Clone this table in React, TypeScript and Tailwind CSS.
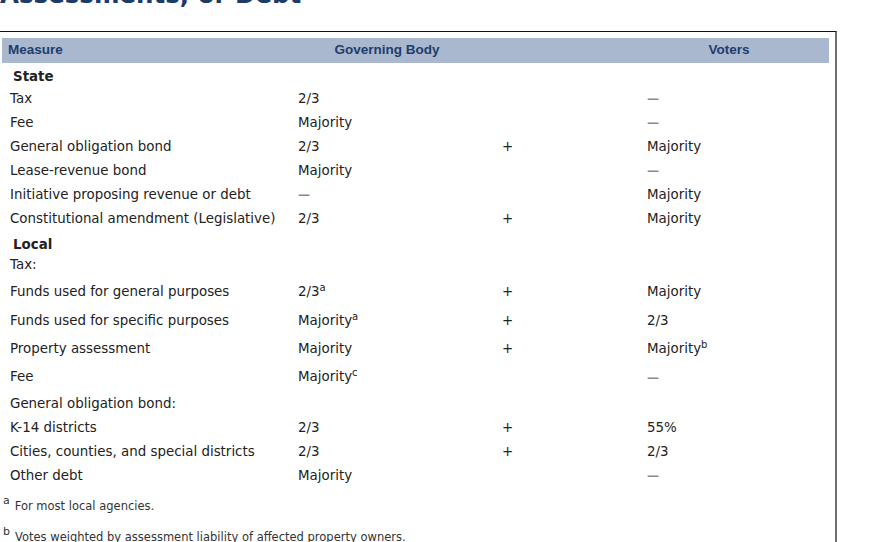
import React from "react";

type Row = {
  label: string;
  bold?: boolean;
  gov?: string;
  govSup?: string;
  plus?: boolean;
  voters?: string;
  votersSup?: string;
  h: string;
};

const rows: Row[] = [
  { label: "State", bold: true, h: "h-[20px]" },
  { label: "Tax", gov: "2/3", voters: "—", h: "h-6" },
  { label: "Fee", gov: "Majority", voters: "—", h: "h-6" },
  { label: "General obligation bond", gov: "2/3", plus: true, voters: "Majority", h: "h-6" },
  { label: "Lease-revenue bond", gov: "Majority", voters: "—", h: "h-6" },
  { label: "Initiative proposing revenue or debt", gov: "—", voters: "Majority", h: "h-6" },
  { label: "Constitutional amendment (Legislative)", gov: "2/3", plus: true, voters: "Majority", h: "h-6" },
  { label: "Local", bold: true, h: "mt-1 h-[20px]" },
  { label: "Tax:", h: "h-[20px]" },
  { label: "Funds used for general purposes", gov: "2/3", govSup: "a", plus: true, voters: "Majority", h: "mt-[2px] h-[30px]" },
  { label: "Funds used for specific purposes", gov: "Majority", govSup: "a", plus: true, voters: "2/3", h: "h-[28px]" },
  { label: "Property assessment", gov: "Majority", plus: true, voters: "Majority", votersSup: "b", h: "h-[28px]" },
  { label: "Fee", gov: "Majority", govSup: "c", voters: "—", h: "h-[29px]" },
  { label: "General obligation bond:", h: "h-6" },
  { label: "K-14 districts", gov: "2/3", plus: true, voters: "55%", h: "h-6" },
  { label: "Cities, counties, and special districts", gov: "2/3", plus: true, voters: "2/3", h: "h-6" },
  { label: "Other debt", gov: "Majority", voters: "—", h: "h-6" },
];

function Value({ text, sup }: { text?: string; sup?: string }) {
  if (!text) {
    return null;
  }

  // the dashes are drawn grey and a little heavier than the text
  if (text === "—") {
    return <span className="text-[12px] font-bold text-[#8a8a8a]">—</span>;
  }

  return (
    <span>
      {text}
      {sup && <sup className="text-[10px]">{sup}</sup>}
    </span>
  );
}

export default function App() {
  return (
    <div
      className="h-[542px] w-[880px] overflow-hidden bg-white text-[#222]"
      style={{ fontFamily: '"DejaVu Sans", Verdana, sans-serif' }}
    >
      <h1 className="-mt-[17px] h-[48px] whitespace-nowrap text-[24.5px] leading-[24px] font-bold text-[#1c3b68]">
        Assessments, or Debt
      </h1>

      <div className="w-[837px] border-t border-r-2 border-t-[#111] border-r-[#707070] pt-[6px] pr-[6px] pl-[2px]">
        <div
          className="grid h-[25px] grid-cols-[290px_190px_147px_200px] items-center bg-[#aab8cf] text-[13.5px] font-bold text-[#1d3d6d]"
          style={{ fontFamily: '"Liberation Sans", Arial, sans-serif' }}
        >
          <span className="pl-[6px]">Measure</span>
          <span className="text-center">Governing Body</span>
          <span />
          <span className="text-center">Voters</span>
        </div>

        <div className="mt-1 pl-[8px] text-[13.4px]">
          {rows.map((row, index) => (
            <div
              key={index}
              className={`grid grid-cols-[288px_204px_145px_1fr] items-center ${row.h}`}
            >
              <span className={row.bold ? "pl-[3px] font-bold" : ""}>{row.label}</span>
              <Value text={row.gov} sup={row.govSup} />
              <span>{row.plus ? "+" : ""}</span>
              <Value text={row.voters} sup={row.votersSup} />
            </div>
          ))}
        </div>

        <div className="mt-[3px] -ml-[2px] text-[11.5px] text-[#333]">
          <p className="flex h-[31px] items-center pl-[3px]">
            <sup className="mr-[5px] text-[11px]">a</sup>
            For most local agencies.
          </p>
          <p className="flex h-[31px] items-center pl-[3px]">
            <sup className="mr-[5px] text-[11px]">b</sup>
            Votes weighted by assessment liability of affected property owners.
          </p>
        </div>
      </div>
    </div>
  );
}
